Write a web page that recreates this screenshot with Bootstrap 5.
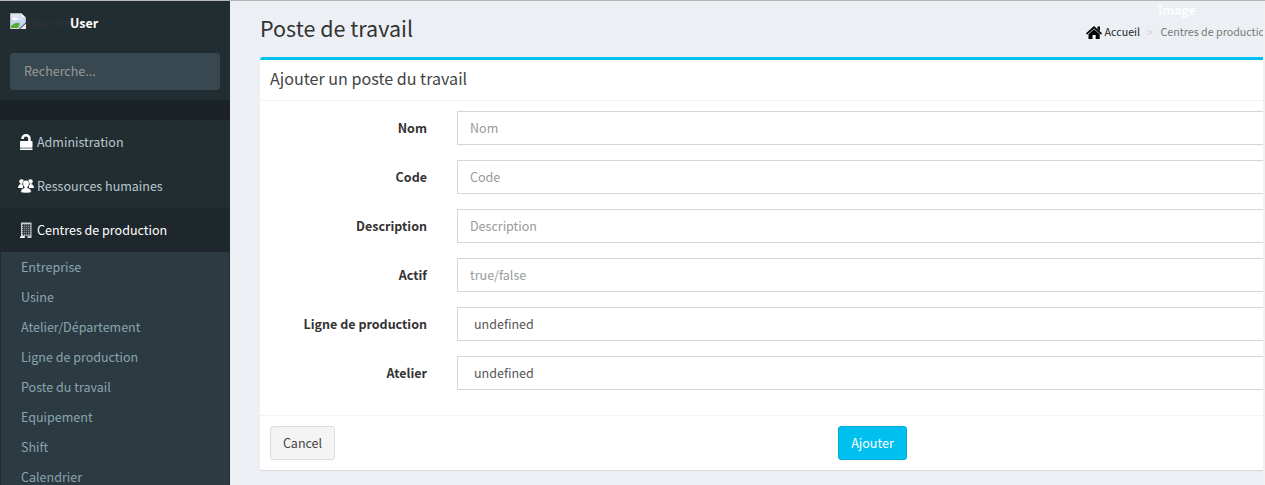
<!DOCTYPE html>
<html lang="fr">
<head>
<meta charset="utf-8">
<meta name="viewport" content="width=device-width, initial-scale=1">
<title>Poste de travail</title>
<link href="https://cdn.jsdelivr.net/npm/bootstrap@5.3.0/dist/css/bootstrap.min.css" rel="stylesheet">
<style>
body{font-family:"Noto Sans CJK JP","Open Sans",sans-serif;font-size:12.53px;line-height:20px;color:#333;background:#ecf0f5;height:485px;overflow:hidden}
.app-shell{height:485px;border-top:1px solid #b5b5b8}
.side{width:230px;background:#222d32;color:#b8c7ce}
.user-row{height:52px;padding:12px 10px 0}
.alt-text{color:#333;width:44px;height:20px;line-height:20px;white-space:nowrap;padding-left:1px}
.user-name{color:#fff;font-weight:700;position:relative}
.search-box{height:37px;margin:0 10px;width:210px;background:#374850;border:0;border-radius:3px;color:#999;font-size:12.53px;padding:5px 14px 7px}
.search-box::placeholder,.field::placeholder{color:#999;opacity:1}
.side-head{height:20px;margin-top:10px;background:#1a2226}
.side-link{height:44px;padding-left:18px;gap:3px;color:#b8c7ce;text-decoration:none}
.side-link.active{background:#1e282c;color:#fff}
.side-link svg{flex:none}
.sub-menu{background:#2c3b41;margin:0 1px;height:233px}
.sub-menu a{display:block;height:30px;line-height:30px;padding-left:20px;color:#8aa4af;text-decoration:none}
.main-pane{border-right:2px solid #f1f1f1;padding-left:30px}
.page-head{height:56px;width:1112px}
.page-head h1{font-size:21.5px;line-height:26px;font-weight:400;margin:14px 0 0;color:#333}
.crumbs{font-size:10.7px;margin:21px 0 0 auto;width:286px;color:#777;white-space:nowrap}
.crumbs svg{margin:3px 2.500px 0 0}
.crumbs .sep{color:#ccc;padding:0 7.500px 0 7px}
.ghost-alt{left:928px;top:-1px;color:#fff;font-weight:700;opacity:.9}
.panel-box{width:1112px;border:0;border-top:3px solid #00c0ef;border-radius:3px;box-shadow:0 1px 1px rgba(0,0,0,.1)}
.panel-box .card-header{background:#fff;border-bottom:1px solid #f4f4f4;height:41px;padding:0 10px;font-size:16.1px;line-height:36px;color:#444}
.panel-box .card-body{padding:10px 10px 10px;height:314px}
.panel-box .card-footer{background:#fff;border-top:1px solid #f4f4f4;height:55px;padding:10px;border-radius:0 0 3px 3px}
.form-line{--bs-gutter-x:30px;margin-bottom:15px;height:34px}
.form-line label{font-weight:700;text-align:right;line-height:34px}
.field{height:34px;font-size:12.53px;line-height:20px;border:1px solid #d2d6de;border-radius:0;padding:5px 12px 7px;color:#555;width:100%}
.field.choice{padding:6px 16px}
.act{height:34px;font-size:12.53px;line-height:20px;padding:6px 0;border-radius:3px;white-space:nowrap}
.act-cancel{background:#f4f4f4;border:1px solid #ddd;color:#444;width:65px}
.act-add{background:#00c0ef;border:1px solid #00acd6;color:#fff;width:69px;margin-left:503px}
</style>
</head>
<body>
<div class="app-shell d-flex">
  <aside class="side flex-shrink-0 overflow-hidden">
    <div class="user-row d-flex">
      <svg width="16" height="16" viewBox="0 0 16 16" class="flex-shrink-0"><path d="M.5.5h11l4 4v5L9 15.500H.5z" fill="#c4d5f6" stroke="#b5b5b5"/><path d="M1 1h10v4h4v2H1z" fill="#d9e5fa"/><path d="M11 0v5h5z" fill="#fff" stroke="#aaa" stroke-width=".6"/><ellipse cx="5" cy="6" rx="2.500" ry="1.200" fill="#fff"/><path d="M1 15v-2q5-5 9-2.500L8 15z" fill="#4fae35"/><path d="M.5 15.500H9" stroke="#ddd"/><path d="M10 16l6-5.500V16z" fill="#eee"/></svg>
      <span class="alt-text">User Image</span>
      <span class="user-name">User</span>
    </div>
    <input class="search-box" placeholder="Recherche...">
    <div class="side-head"></div>
    <nav>
      <a href="#" class="side-link d-flex align-items-center"><svg width="16" height="16" viewBox="0 0 16 16"><path d="M3.300 5V4.500a4.700 4.500 0 0 1 9.400 0V8h-2.500V4.800a2.200 2.300 0 0 0-4.400 0V5z" fill="#fff"/><rect x="2" y="7" width="12.500" height="6.800" rx=".8" fill="#fff"/><path d="M2 14.400h12.500V16H2z" fill="#fff"/></svg><span>Administration</span></a>
      <a href="#" class="side-link d-flex align-items-center"><svg width="16" height="16" viewBox="0 0 16 16" fill="#fff"><circle cx="3.600" cy="3.600" r="2.400"/><circle cx="12.400" cy="3.600" r="2.400"/><path d="M0 10Q.3 6 3.500 6l1.500 1v3zM16 10Q15.700 6 12.500 6L11 7v3z"/><path d="M8 2.200c2 0 3.200 1.400 3.200 3.300 0 1.700-.8 2.800-1.500 3.400v1q3.600.8 3.600 3.600Q13 15 8 15t-5.300-1.500q0-2.800 3.600-3.600v-1C5.600 8.300 4.800 7.200 4.800 5.500c0-1.900 1.200-3.300 3.200-3.300z" stroke="#222d32" stroke-width=".5"/></svg><span>Ressources humaines</span></a>
      <a href="#" class="side-link active d-flex align-items-center"><svg width="16" height="16" viewBox="0 0 16 16"><path d="M3 .5h10.500V16H3z" fill="#c9cdce"/><path d="M4.500 2h7.700v11.500H4.500z" fill="#8b9193"/><path d="M5.500 2v11.500M7.500 2v11.500M9.500 2v11.500M11.500 2v11.500M4 3.500h8.500M4 5.500h8.500M4 7.500h8.500M4 9.500h8.500M4 11.500h8.500" stroke="#30393c" stroke-width=".8"/><path d="M7 14h2.500v2H7z" fill="#1e282c"/><path d="M2 14.500h4V16H2z" fill="#fff"/></svg><span>Centres de production</span></a>
      <div class="sub-menu">
        <a href="#">Entreprise</a><a href="#">Usine</a><a href="#">Atelier/Département</a><a href="#">Ligne de production</a><a href="#">Poste du travail</a><a href="#">Equipement</a><a href="#">Shift</a><a href="#">Calendrier</a>
      </div>
    </nav>
  </aside>
  <main class="main-pane position-relative flex-grow-1 overflow-hidden">
    <div class="page-head d-flex">
      <h1>Poste de travail</h1>
      <div class="crumbs d-flex">
        <svg width="16" height="16" viewBox="0 0 16 16"><path d="M8 1l8 7.300-1 1.400L8 3.400 1 9.700 0 8.300z" fill="#000"/><path d="M11.500 1.500H14V6l-2.500-2zM8 4.300l5.700 5V14H9.700v-4H6.500v4H2.500V9.300z" fill="#000"/></svg>
        <span class="text-dark crumb-home">Accueil</span><span class="sep">&gt;</span><span>Centres de production</span>
      </div>
    </div>
    <span class="ghost-alt position-absolute">Image</span>
    <section class="card panel-box">
      <div class="card-header">Ajouter un poste du travail</div>
      <div class="card-body">
        <div class="row form-line"><label class="col-2" for="f1">Nom</label><div class="col-10"><input id="f1" class="field" placeholder="Nom"></div></div>
        <div class="row form-line"><label class="col-2" for="f2">Code</label><div class="col-10"><input id="f2" class="field" placeholder="Code"></div></div>
        <div class="row form-line"><label class="col-2" for="f3">Description</label><div class="col-10"><input id="f3" class="field" placeholder="Description"></div></div>
        <div class="row form-line"><label class="col-2" for="f4">Actif</label><div class="col-10"><input id="f4" class="field" placeholder="true/false"></div></div>
        <div class="row form-line"><label class="col-2">Ligne de production</label><div class="col-10"><div class="field choice">undefined</div></div></div>
        <div class="row form-line"><label class="col-2">Atelier</label><div class="col-10"><div class="field choice">undefined</div></div></div>
      </div>
      <div class="card-footer d-flex">
        <button class="btn act act-cancel">Cancel</button>
        <button class="btn act act-add">Ajouter</button>
      </div>
    </section>
  </main>
</div>
<script src="https://cdn.jsdelivr.net/npm/bootstrap@5.3.0/dist/js/bootstrap.bundle.min.js"></script>
</body>
</html>
